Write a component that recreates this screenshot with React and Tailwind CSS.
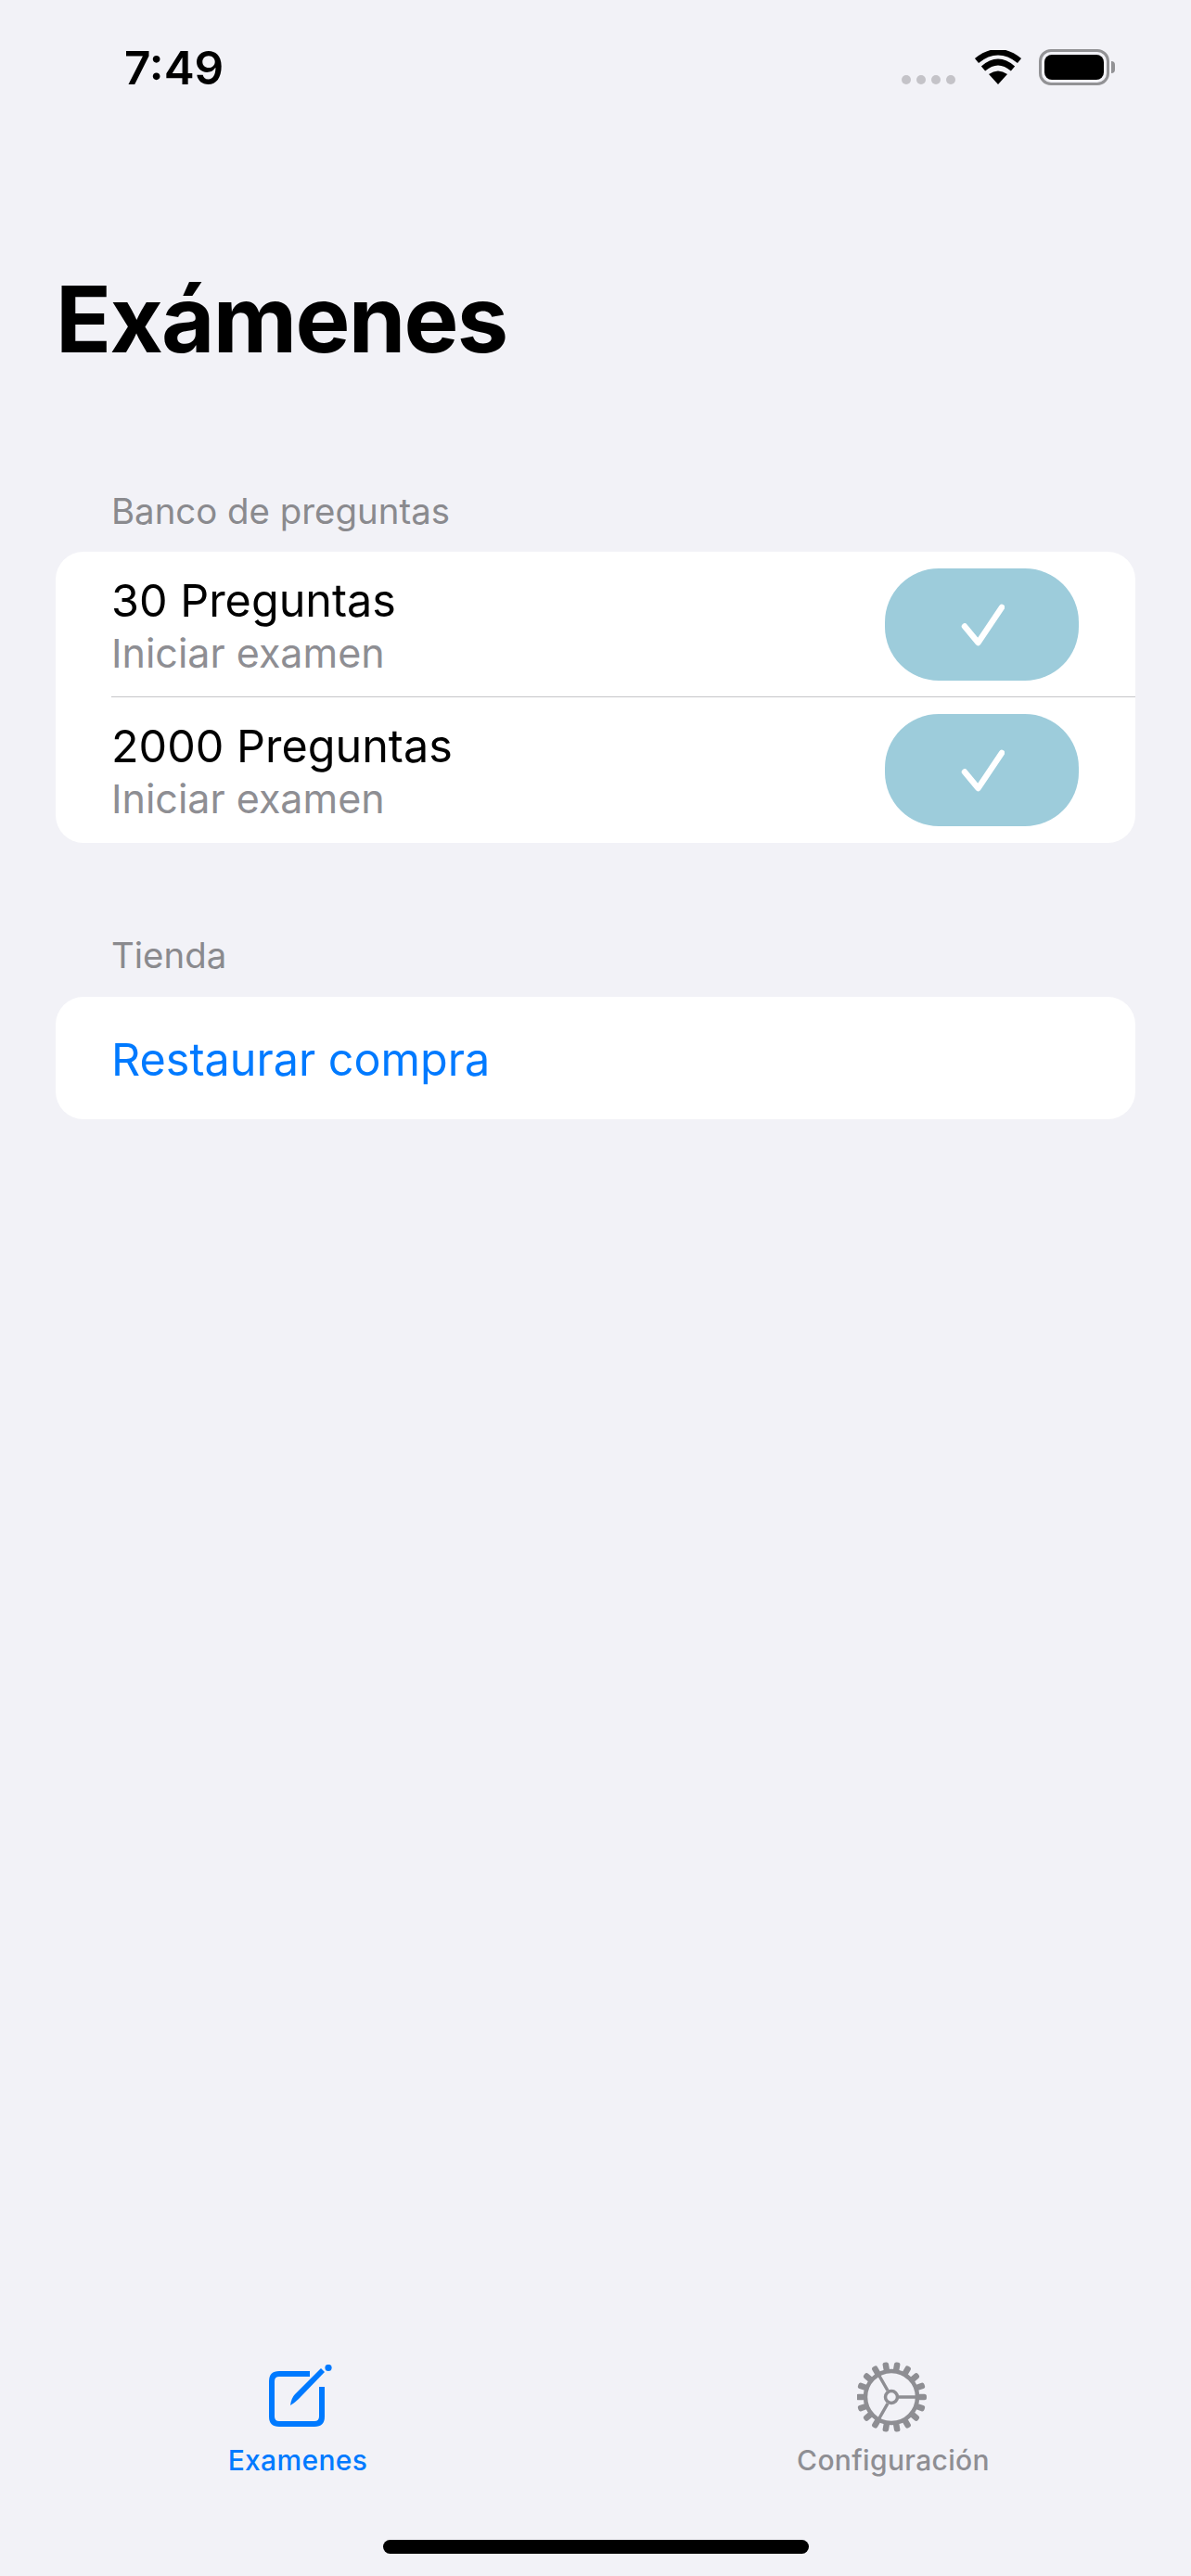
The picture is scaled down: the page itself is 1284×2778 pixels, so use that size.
const rowTitle = "text-[48.5px] leading-[58px] text-black";

const teeth = Array.from({ length: 18 }, (_, i) => i * 20);

const StatusBar = () => (
  <div className="h-[110px] pl-[134px] pr-[82px] pt-[43px] flex justify-between">
    <span className="text-[49.5px] leading-[60px] font-semibold text-black">7:49</span>
    <div className="flex items-start">
      <div className="flex gap-[6px] mt-[38px] mr-[20px]">
        <span className="w-[10px] h-[10px] rounded-full bg-[#c4c3c8]" />
        <span className="w-[10px] h-[10px] rounded-full bg-[#c4c3c8]" />
        <span className="w-[10px] h-[10px] rounded-full bg-[#c4c3c8]" />
        <span className="w-[10px] h-[10px] rounded-full bg-[#c4c3c8]" />
      </div>
      <svg width="52" height="38" viewBox="0 0 52 38" className="mt-[11px] mr-[18px]">
        <path d="M26 37 L16 26 Q26 19 36 26 Z" fill="#000" />
        <path d="M10 20 Q26 6 42 20" fill="none" stroke="#000" strokeWidth="6.5" />
        <path d="M3 11.5 Q26 -7 49 11.5" fill="none" stroke="#000" strokeWidth="6.5" />
      </svg>
      <div className="flex items-center mt-[10px]">
        <div className="w-[76px] h-[39px] rounded-[13px] border-[3px] border-[#929295] p-[3px]">
          <div className="w-full h-full rounded-[8px] bg-black" />
        </div>
        <span className="w-[4px] h-[13px] ml-[2px] rounded-r-full bg-[#929295]" />
      </div>
    </div>
  </div>
);

const ExamRow = ({ title }) => (
  <div className="pl-[60px] pr-[61px] h-[156px] flex items-center justify-between">
    <div className="flex flex-col mt-[4px]">
      <span className={rowTitle}>{title}</span>
      <span className="text-[43px] leading-[54px] text-[#8e8e93]">Iniciar examen</span>
    </div>
    <button className="w-[209px] h-[121px] rounded-[58px] bg-[#9dccdb] flex items-center justify-center">
      <svg width="48" height="48" viewBox="-24 -24 48 48">
        <path
          d="M-19 2.5 L-4.5 20 L21 -18"
          fill="none"
          stroke="#fff"
          strokeWidth="6.5"
          strokeLinecap="round"
          strokeLinejoin="round"
        />
      </svg>
    </button>
  </div>
);

const SectionLabel = ({ children, className }) => (
  <div className={`pl-[120px] text-[38.4px] leading-[46px] text-[#8a8a8e] ${className}`}>{children}</div>
);

const EditIcon = () => (
  <svg width="76" height="70" viewBox="283 550 76 70">
    <path
      d="M334 560 H301 Q293 560 293 568 V606 Q293 614 301 614 H339 Q347 614 347 606 V574"
      fill="none"
      stroke="#007aff"
      strokeWidth="6"
    />
    <path d="M313 594 Q314 586 318 582 L346 554 L350 558 L322 587 Q318 591 313 594 Z" fill="#007aff" />
    <circle cx="354" cy="553.5" r="3.6" fill="#007aff" />
  </svg>
);

const GearIcon = () => (
  <svg width="78" height="78" viewBox="-37 -39 78 78">
    {teeth.map((a) => (
      <rect key={a} x="28" y="-3.25" width="10" height="6.5" rx="2.5" fill="#8e8e93" transform={`rotate(${a})`} />
    ))}
    <circle r="28" fill="none" stroke="#8e8e93" strokeWidth="4.5" />
    <circle r="6.5" fill="none" stroke="#8e8e93" strokeWidth="3.5" />
    <path d="M8 0 H28 M-4 -7 L-14 -24.5 M-4 7 L-14 24.5" stroke="#8e8e93" strokeWidth="3.5" fill="none" />
  </svg>
);

const TabBar = () => (
  <div className="mt-auto">
    <div className="grid grid-cols-2 h-[179px]">
      <div className="flex flex-col items-center">
        <EditIcon />
        <span className="mt-[15px] text-[30px] leading-[36px] font-medium tracking-[0.35px] text-[#007aff]">Examenes</span>
      </div>
      <div className="flex flex-col items-center">
        <div className="h-[70px] flex items-center">
          <GearIcon />
        </div>
        <span className="mt-[15px] text-[30px] leading-[36px] font-medium tracking-[0.35px] text-[#8e8e93]">Configuración</span>
      </div>
    </div>
    <div className="h-[49px] flex justify-center pt-[10px]">
      <div className="w-[459px] h-[15px] rounded-full bg-black" />
    </div>
  </div>
);

export default function App() {
  return (
    <div className="w-[1284px] h-[2778px] bg-[#f2f2f7] flex flex-col font-['Inter',sans-serif]">
      <StatusBar />
      <h1 className="mt-[174px] pl-[60px] text-[99px] leading-[120px] font-bold text-black tracking-[-1.7px]">Exámenes</h1>
      <SectionLabel className="mt-[124px]">Banco de preguntas</SectionLabel>
      <div className="mt-[21px] mx-[60px] w-[1164px] pb-px rounded-[30px] bg-white">
        <ExamRow title="30 Preguntas" />
        <div className="ml-[60px] h-px bg-[#c6c6c8]" />
        <ExamRow title="2000 Preguntas" />
      </div>
      <SectionLabel className="mt-[98px]">Tienda</SectionLabel>
      <div className="mt-[22px] mx-[60px] w-[1164px] h-[132px] rounded-[30px] bg-white pl-[60px] pt-[4px] flex items-center">
        <span className="text-[48.5px] leading-[58px] text-[#007aff]">Restaurar compra</span>
      </div>
      <TabBar />
    </div>
  );
}
